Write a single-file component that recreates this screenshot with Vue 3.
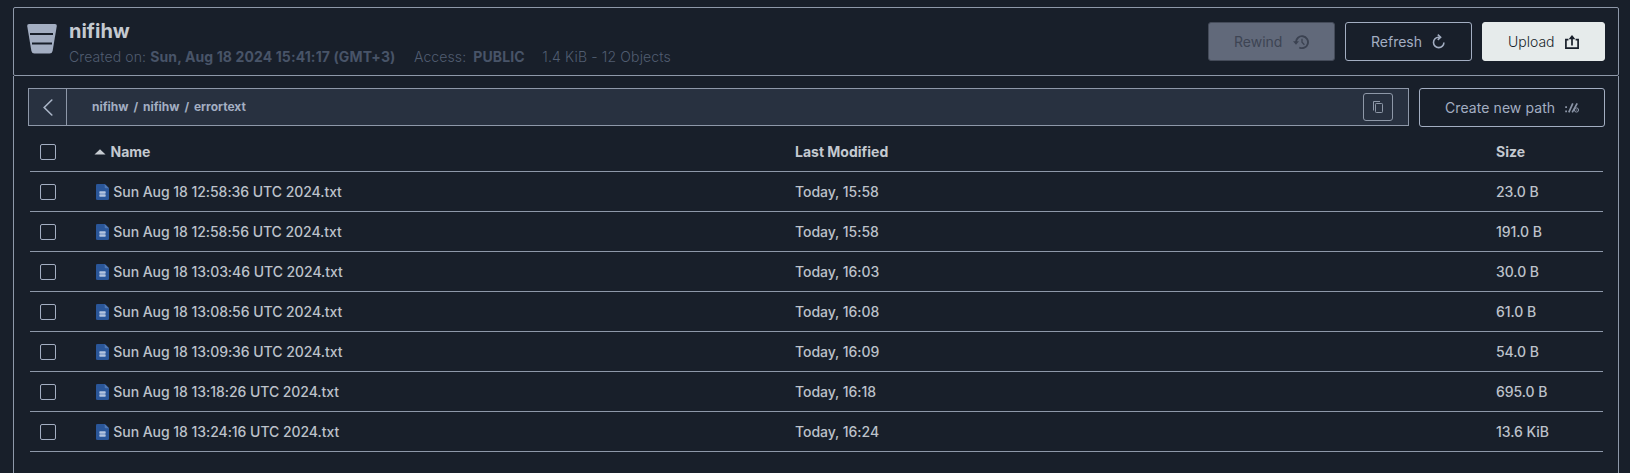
<script setup>
const crumbs = ['nifihw', '/', 'nifihw', '/', 'errortext']
const files = [
  { name: 'Sun Aug 18 12:58:36 UTC 2024.txt', modified: 'Today, 15:58', size: '23.0 B' },
  { name: 'Sun Aug 18 12:58:56 UTC 2024.txt', modified: 'Today, 15:58', size: '191.0 B' },
  { name: 'Sun Aug 18 13:03:46 UTC 2024.txt', modified: 'Today, 16:03', size: '30.0 B' },
  { name: 'Sun Aug 18 13:08:56 UTC 2024.txt', modified: 'Today, 16:08', size: '61.0 B' },
  { name: 'Sun Aug 18 13:09:36 UTC 2024.txt', modified: 'Today, 16:09', size: '54.0 B' },
  { name: 'Sun Aug 18 13:18:26 UTC 2024.txt', modified: 'Today, 16:18', size: '695.0 B' },
  { name: 'Sun Aug 18 13:24:16 UTC 2024.txt', modified: 'Today, 16:24', size: '13.6 KiB' },
]
</script>

<template>
  <div class="screen">
    <header class="header">
      <svg class="bucket" width="30" height="30" viewBox="0 0 30 30">
        <path d="M2 0H28Q30 0 29.8 2L25.6 27Q25 29.5 22.6 29.5H7.4Q5 29.5 4.4 27L.2 2Q0 0 2 0Z" fill="#a3aec2" />
        <path d="M3 10H26M5 19.5H25" stroke="#181f2a" stroke-width="2" />
      </svg>
      <div class="info">
        <h1>nifihw</h1>
        <div class="meta">
          <span class="created">Created on: <b>Sun, Aug 18 2024 15:41:17 (GMT+3)</b></span>
          <span class="access">Access: <b>PUBLIC</b></span>
          <span class="usage">1.4 KiB - 12 Objects</span>
        </div>
      </div>
      <div class="actions">
        <button class="btn disabled" disabled>
          <span>Rewind</span>
          <svg width="16" height="14" viewBox="0 0 16 14" fill="none" stroke="#3b4251">
            <path d="M3 7.3A6 6 0 1 1 6.3 12.5" stroke-width="1.9" />
            <path d="M0 6.2H6L3 9.7Z" fill="#3b4251" stroke="none" />
            <path d="M9 3.8V7.3L11.4 9.8" stroke-width="1.3" />
          </svg>
        </button>
        <button class="btn">
          <span>Refresh</span>
          <svg width="14" height="15" viewBox="0 0 14 15" fill="none" stroke="#a3aec2">
            <path d="M7.6 3.2H6.6A5.2 5.2 0 1 0 11.9 8.4" stroke-width="1.6" />
            <path d="M5.8.6L8.6 3.2L5.8 5.8" stroke-width="1.6" />
          </svg>
        </button>
        <button class="btn upload">
          <span>Upload</span>
          <svg width="14" height="14" viewBox="0 0 14 14" fill="none" stroke="#181f2a">
            <path d="M3.4 4.6H.9V13.1H13.1V4.6H10.6" stroke-width="1.7" />
            <path d="M7 10.6V2" stroke-width="1.7" />
            <path d="M3.6 4.3L7 0L10.4 4.3Z" fill="#181f2a" stroke="none" />
          </svg>
        </button>
      </div>
    </header>

    <main class="content">
      <div class="toolbar">
        <div class="pathbar">
          <div class="back">
            <svg width="10" height="17" viewBox="0 0 10 17" fill="none" stroke="#a9b4c6" stroke-width="1.6" stroke-linecap="round">
              <path d="M8.8 1L1.2 8.5L8.8 16" />
            </svg>
          </div>
          <div class="crumbs">
            <span v-for="(crumb, i) in crumbs" :key="i">{{ crumb }}</span>
          </div>
          <div class="copy">
            <svg width="10" height="12" viewBox="0 0 10 12" fill="none" stroke="#8e98a8">
              <path d="M.5 9.5V.5H7" />
              <rect x="2.5" y="2.5" width="7" height="9" rx=".8" />
            </svg>
          </div>
        </div>
        <button class="btn path">
          <span>Create new path</span>
          <svg width="14" height="10" viewBox="0 0 14 10" fill="none" stroke="#8a94a6">
            <path d="M.2 4.2H2M.2 8.4H2" stroke-width="1.8" />
            <path d="M3.8 9.4L7.8 .4M7.2 9.4L12.2 .4" stroke-width="1.7" />
            <circle cx="11.5" cy="7" r="2.1" stroke-width="1" />
            <path d="M10.6 7H12.4" stroke-width=".8" />
          </svg>
        </button>
      </div>

      <div class="table">
        <div class="row head">
          <i class="check"></i>
          <div class="name">
            <svg class="sort" width="12" height="6" viewBox="0 0 12 6"><path d="M.5 5.5L6 .2L11.5 5.5Z" fill="#c8cdd3" /></svg>
            <span>Name</span>
          </div>
          <div class="modified">Last Modified</div>
          <div class="size">Size</div>
        </div>
        <div v-for="file in files" :key="file.name" class="row">
          <i class="check"></i>
          <div class="name">
            <svg class="file" width="13" height="16" viewBox="0 0 13 16">
              <path d="M1.3 0H8.7L13 4.2V14.7Q13 16 11.7 16H1.3Q0 16 0 14.7V1.3Q0 0 1.3 0Z" fill="#2a5699" />
              <path d="M8.7 0L13 4.2H9.8Q8.7 4.2 8.7 3.2Z" fill="#5078b4" />
              <path d="M3.5 7H9.5V13H3.5Z" fill="#8fa8d0" />
              <path d="M3.5 8.5H9.5M3.5 11.5H9.5" stroke="#b4c4de" />
            </svg>
            <span>{{ file.name }}</span>
          </div>
          <div class="modified">{{ file.modified }}</div>
          <div class="size">{{ file.size }}</div>
        </div>
      </div>
    </main>
  </div>
</template>

<style>
body {
  background: #181f2a;
}
</style>

<style scoped>
.screen {
  box-sizing: border-box;
  height: 473px;
  padding: 7px 11px 0 13px;
  display: flex;
  flex-direction: column;
  overflow: hidden;
  background: #181f2a;
  color: #c4c9d0;
  font: 14px/20px Inter, "Liberation Sans", sans-serif;
}
.header {
  box-sizing: border-box;
  height: 69px;
  border: 1px solid #8e98a9;
  border-radius: 2px;
  display: flex;
  padding: 14px 13px 0;
}
.bucket {
  margin-top: 2px;
}
.info {
  margin-left: 12px;
}
h1 {
  margin: -4px 0 0;
  font-size: 20px;
  line-height: 26px;
  font-weight: 700;
}
.meta {
  display: flex;
  margin-top: 3px;
  color: #515d71;
  font-weight: 300;
  letter-spacing: 0.11px;
}
.meta b {
  color: #485468;
  font-weight: 700;
}
.created {
  margin-right: 18.5px;
}
.access {
  margin-right: 17.5px;
}
.access b {
  margin-left: 3px;
}
.usage {
  letter-spacing: 0.15px;
}
.actions {
  display: flex;
  gap: 10px;
  margin-left: auto;
}
.btn {
  box-sizing: border-box;
  width: 127px;
  height: 39px;
  padding: 0 25px;
  border: 1px solid #a3aec2;
  border-radius: 3px;
  display: flex;
  align-items: center;
  justify-content: space-between;
  background: transparent;
  color: #a3aec2;
  font: 400 14px/20px Inter, "Liberation Sans", sans-serif;
}
.disabled {
  background: #61697a;
  border-color: #444b59;
  color: #3d4453;
}
.upload {
  width: 123px;
  background: #e6ebeb;
  border-color: #e6ebeb;
  color: #181f2a;
  font-weight: 300;
}
.content {
  flex: 1;
  border: solid #8e98a9;
  border-width: 0 1px;
  padding: 12px 13px 0 14px;
}
.toolbar {
  display: flex;
  gap: 10px;
}
.pathbar {
  box-sizing: border-box;
  flex: 1;
  height: 38px;
  border: 1px solid #8e98a9;
  background: #283140;
  display: flex;
  align-items: center;
  padding-right: 15px;
}
.back {
  align-self: stretch;
  width: 37px;
  border-right: 1px solid #8e98a9;
  display: flex;
  align-items: center;
  justify-content: center;
}
.crumbs {
  flex: 1;
  display: flex;
  gap: 4.9px;
  padding-left: 25px;
  color: #a3aec2;
  font-size: 12px;
  font-weight: 700;
}
.copy {
  box-sizing: border-box;
  width: 30px;
  height: 28px;
  border: 1px solid #8e98a8;
  border-radius: 3px;
  display: flex;
  align-items: center;
  justify-content: center;
}
.path {
  width: 186px;
  letter-spacing: 0.08px;
}
.table {
  margin: 5px 2px 0;
}
.row {
  box-sizing: border-box;
  height: 40px;
  border-bottom: 1px solid #8e98a9;
  display: grid;
  grid-template-columns: 65px 700px 701px 1fr;
  align-items: center;
  color: #bdc2ca;
  font-weight: 500;
  letter-spacing: -0.05px;
}
.head {
  color: #c4c9d0;
  font-weight: 700;
  letter-spacing: 0;
}
.check {
  box-sizing: border-box;
  width: 16px;
  height: 16px;
  margin-left: 10px;
  border: 1px solid #a3aec2;
  border-radius: 2px;
}
.name {
  display: flex;
  align-items: center;
}
.sort {
  margin: 0 4.5px 0 -1px;
}
.file {
  margin: 0 4.3px 0 1px;
}
</style>
